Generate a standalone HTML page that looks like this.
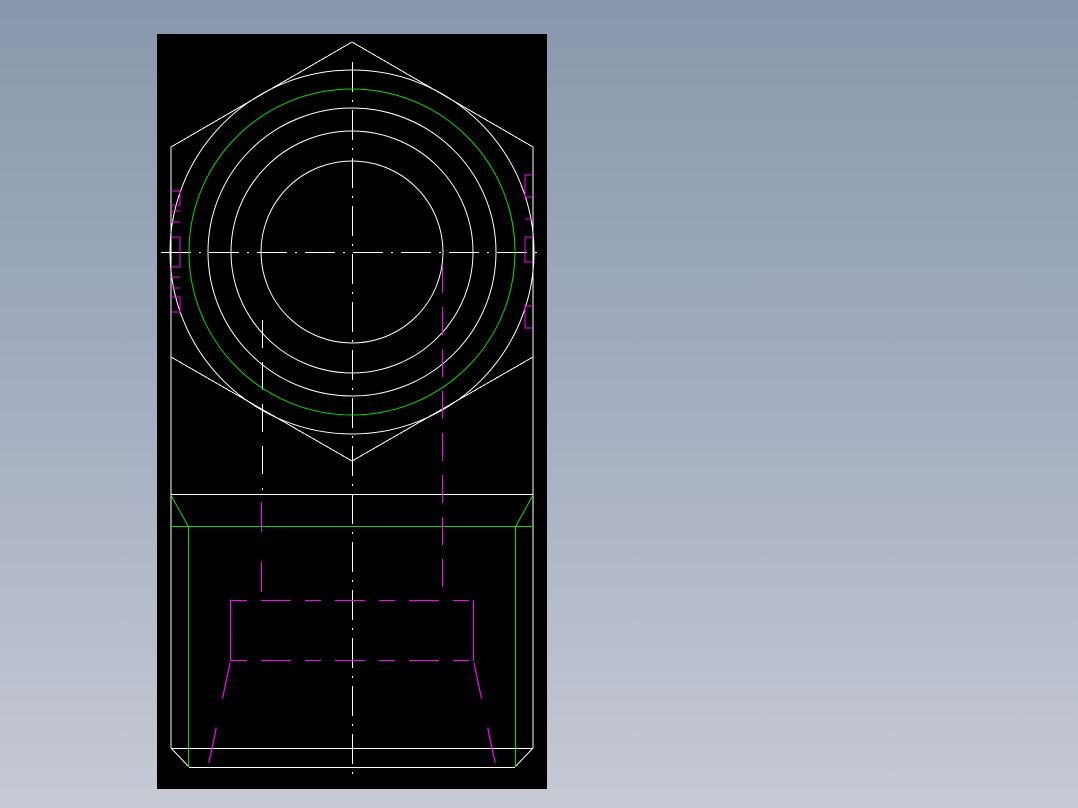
<!DOCTYPE html>
<html><head><style>
html,body{margin:0;padding:0;width:1078px;height:808px;overflow:hidden;background:linear-gradient(to bottom,#8898ac 0%,#a4aec0 50%,#c6cad4 100%);}
svg{position:absolute;left:0;top:0}
</style></head><body>
<svg width="1078" height="808" viewBox="0 0 1078 808">
<rect x="157" y="34" width="390" height="755" fill="#000"/>
<g fill="none" stroke="#fff" stroke-width="1" shape-rendering="crispEdges">
<polygon points="352,42 533,147 533,357 352,461 171,357 171,147"/>
<circle cx="352" cy="252" r="182" shape-rendering="auto"/>
<circle cx="352" cy="252" r="144" shape-rendering="auto"/>
<circle cx="352" cy="252" r="121" shape-rendering="auto"/>
<circle cx="352" cy="252" r="91" shape-rendering="auto"/>
<line x1="171" y1="357" x2="171" y2="748"/>
<line x1="533" y1="357" x2="533" y2="748"/>
<line x1="171" y1="494.5" x2="533" y2="494.5"/>
<line x1="171" y1="748.5" x2="533" y2="748.5"/>
<line x1="189" y1="767.5" x2="515" y2="767.5"/>
<polyline points="171,748 189,767" shape-rendering="auto"/>
<polyline points="533,748 515,767" shape-rendering="auto"/>
<line x1="352.5" y1="62" x2="352.5" y2="780" stroke-dasharray="30,8,2,8"/>
<line x1="161" y1="252.5" x2="543" y2="252.5" stroke-dasharray="30,8,2,8"/>
<line x1="262.5" y1="320" x2="262.5" y2="490" stroke-dasharray="28,14"/>
</g>
<g fill="none" stroke="#00e000" stroke-width="1" shape-rendering="crispEdges">
<circle cx="352" cy="252" r="163" shape-rendering="auto"/>
<line x1="171" y1="526.5" x2="533" y2="526.5"/>
<line x1="188.5" y1="526" x2="188.5" y2="767"/>
<line x1="515.5" y1="526" x2="515.5" y2="767"/>
<polyline points="171,495 188,526" shape-rendering="auto"/>
<polyline points="533,495 516,526" shape-rendering="auto"/>
</g>
<g fill="none" stroke="#f0f" stroke-width="1.2" shape-rendering="crispEdges">
<line x1="442.5" y1="265" x2="442.5" y2="600" stroke-dasharray="28,14"/>
<line x1="261.5" y1="502" x2="261.5" y2="600" stroke-dasharray="30,30"/>
<line x1="231" y1="600.5" x2="473" y2="600.5" stroke-dasharray="16,14,30,14"/>
<line x1="231" y1="660.5" x2="473" y2="660.5" stroke-dasharray="16,14,30,14"/>
<line x1="230.5" y1="600" x2="230.5" y2="661"/>
<line x1="473.5" y1="600" x2="473.5" y2="661"/>
<line x1="230" y1="663" x2="208" y2="767" stroke-dasharray="36,30" shape-rendering="auto"/>
<line x1="474" y1="663" x2="496" y2="767" stroke-dasharray="36,30" shape-rendering="auto"/>
<polyline points="171,191 180,191 180,205 171,205"/>
<line x1="171" y1="211" x2="180" y2="211"/>
<line x1="171" y1="222" x2="180" y2="222"/>
<polyline points="171,237 180,237 180,267 171,267"/>
<line x1="171" y1="277" x2="180" y2="277"/>
<line x1="171" y1="288" x2="180" y2="288"/>
<polyline points="171,297 180,297 180,312 171,312"/>
<polyline points="533,175 525,175 525,197 533,197"/>
<line x1="525" y1="219" x2="533" y2="219"/>
<polyline points="533,237 525,237 525,262 533,262"/>
<polyline points="533,306 525,306 525,328 533,328"/>
</g>
</svg>
</body></html>
